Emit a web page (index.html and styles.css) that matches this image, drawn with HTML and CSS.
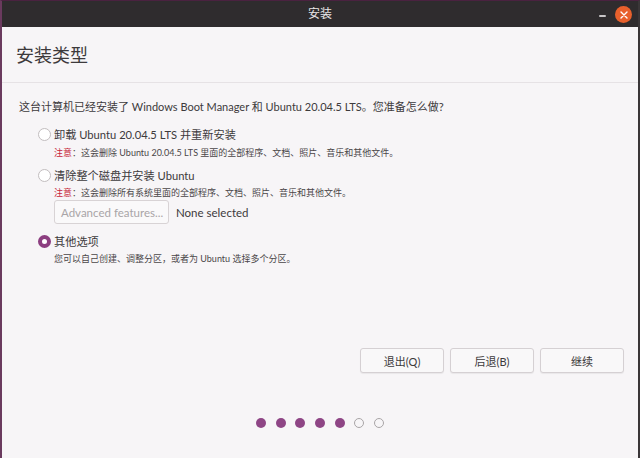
FILE: index.html
```html
<!DOCTYPE html>
<html lang="zh-CN">
<head>
<meta charset="utf-8">
<title>安装</title>
<link rel="stylesheet" href="styles.css">
</head>
<body>
<div class="window">
  <div class="titlebar">
    <span class="title">安装</span>
    <div class="controls">
      <span class="minimize"></span>
      <span class="close">
        <svg width="8" height="8" viewBox="0 0 8 8"><path d="M1 1L7 7M7 1L1 7" stroke="#fff" stroke-width="1.4" stroke-linecap="round"/></svg>
      </span>
    </div>
  </div>
  <div class="content">
    <div class="header"><h1>安装类型</h1></div>
    <div class="main">
      <p class="question">这台计算机已经安装了 Windows Boot Manager 和 Ubuntu 20.04.5 LTS。您准备怎么做?</p>
      <div class="options">
        <div class="option opt1">
          <span class="radio"></span><span class="label">卸载 Ubuntu 20.04.5 LTS 并重新安装</span>
        </div>
        <p class="note n1"><span class="warn">注意</span>：这会删除 Ubuntu 20.04.5 LTS 里面的全部程序、文档、照片、音乐和其他文件。</p>
        <div class="option opt2">
          <span class="radio"></span><span class="label">清除整个磁盘并安装 Ubuntu</span>
        </div>
        <p class="note n2"><span class="warn">注意</span>：这会删除所有系统里面的全部程序、文档、照片、音乐和其他文件。</p>
        <div class="adv-row">
          <span class="adv-btn">Advanced features...</span>
          <span class="adv-status">None selected</span>
        </div>
        <div class="option opt3">
          <span class="radio checked"></span><span class="label">其他选项</span>
        </div>
        <p class="note n3">您可以自己创建、调整分区，或者为 Ubuntu 选择多个分区。</p>
      </div>
      <div class="buttons">
        <span class="btn">退出(Q)</span>
        <span class="btn">后退(B)</span>
        <span class="btn">继续</span>
      </div>
      <div class="dots">
        <span class="dot on"></span><span class="dot on"></span><span class="dot on"></span><span class="dot on"></span><span class="dot on"></span><span class="dot"></span><span class="dot"></span>
      </div>
    </div>
  </div>
</div>
</body>
</html>
```
FILE: styles.css
```css
* { box-sizing: border-box; }
html, body { margin: 0; padding: 0; }
body {
  width: 640px;
  height: 458px;
  overflow: hidden;
  background: #3b1f35;
  font-family: "Lato", "Noto Sans CJK SC", sans-serif;
  color: #3d3a3c;
}
.window {
  width: 640px;
  height: 458px;
  display: flex;
  flex-direction: column;
  border-left: 2px solid #6a3a5e;
  border-right: 2px solid #3a3638;
  border-top: 1px solid #4a2240;
}
.titlebar {
  height: 26px;
  flex: none;
  background: #2f2c2e;
  display: flex;
  align-items: center;
  justify-content: center;
  position: relative;
}
.title {
  color: #e8e6e7;
  font-size: 12px;
  line-height: 14px;
}
.controls {
  position: absolute;
  right: 6px;
  top: 5px;
  display: flex;
  align-items: center;
  gap: 9px;
}
.minimize {
  width: 7px;
  height: 2px;
  background: #c9c6c8;
  border-radius: 1px;
  margin-top: 2px;
}
.close {
  width: 17px;
  height: 17px;
  border-radius: 50%;
  background: #e8602c;
  display: flex;
  align-items: center;
  justify-content: center;
}
.content {
  flex: 1;
  background: #f7f5f7;
  display: flex;
  flex-direction: column;
}
.header {
  height: 56px;
  flex: none;
  border-bottom: 1px solid #e6e2e5;
  display: flex;
  align-items: center;
  padding-left: 14px;
}
.header h1 {
  margin: 0;
  font-weight: 400;
  font-size: 18px;
  color: #3d3a3c;
  padding-bottom: 1px;
}
.main {
  flex: 1;
  display: flex;
  flex-direction: column;
}
.question {
  margin: 16px 0 0 17px;
  font-size: 11px;
  line-height: 16px;
}
.options {
  padding-left: 36px;
  display: flex;
  flex-direction: column;
}
.option {
  display: flex;
  align-items: center;
  height: 18px;
  font-size: 11.2px;
}
.opt1 { margin-top: 10px; }
.opt2 { margin-top: 6px; }
.opt3 { margin-top: 8px; }
.radio {
  width: 13px;
  height: 13px;
  border-radius: 50%;
  border: 1px solid #c2bdbf;
  background: #ffffff;
  margin-right: 3px;
  flex: none;
}
.radio.checked {
  border: 4px solid #8c3e80;
  background: #ffffff;
}
.note {
  margin: 0;
  padding-left: 16px;
  font-size: 9px;
  line-height: 14px;
  color: #4a4648;
}
.n1 { margin-top: 3px; }
.n2 { margin-top: 2px; }
.n3 { margin-top: 2px; }
.warn { color: #c7263a; }
.adv-row {
  display: flex;
  align-items: center;
  padding-left: 16px;
  height: 24px;
}
.adv-btn {
  width: 115px;
  height: 24px;
  border: 1px solid #d8d3d5;
  border-radius: 3px;
  background: #faf9fa;
  color: #a9a5a7;
  font-size: 11.5px;
  display: flex;
  align-items: center;
  padding-left: 6px;
}
.adv-status {
  margin-left: 7px;
  font-size: 11.5px;
  color: #3d3a3c;
}
.buttons {
  margin-top: auto;
  display: flex;
  justify-content: flex-end;
  gap: 6px;
  padding-right: 14px;
}
.btn {
  width: 84px;
  height: 25px;
  border: 1px solid #d5d0d3;
  border-radius: 3px;
  background: #f9f8f9;
  box-shadow: 0 1px 1px rgba(0,0,0,0.06);
  display: flex;
  align-items: center;
  justify-content: center;
  font-size: 11px;
  color: #3d3a3c;
}
.dots {
  margin-top: 45px;
  margin-bottom: 30px;
  display: flex;
  justify-content: center;
  gap: 9.7px;
}
.dot {
  width: 10px;
  height: 10px;
  border-radius: 50%;
  border: 1px solid #a9a5a7;
  background: transparent;
}
.dot.on {
  border: none;
  background: #8e4585;
}
```
